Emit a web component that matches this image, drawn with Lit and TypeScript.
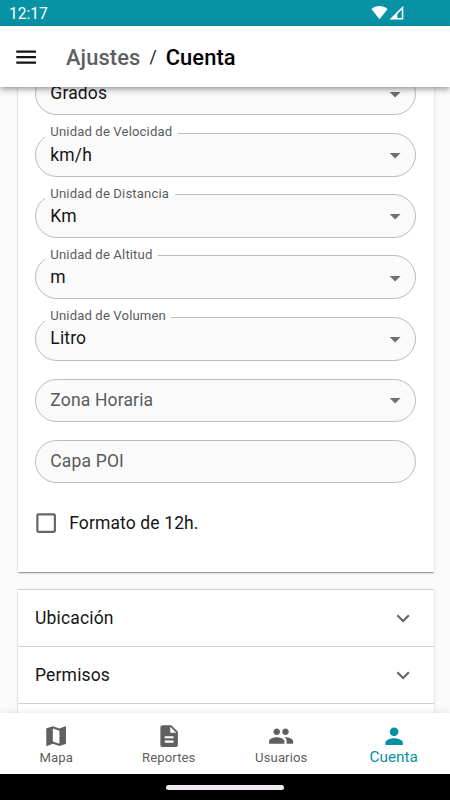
import { LitElement, html, css, svg, nothing } from "lit";
import { customElement, property } from "lit/decorators.js";
import { classMap } from "lit/directives/class-map.js";

const icons: Record<string, string> = {
  menu: "M3 18h18v-2H3v2zm0-5h18v-2H3v2zm0-7v2h18V6H3z",
  drop: "M7 10l5 5 5-5z",
  expand: "M16.59 8.59 12 13.17 7.41 8.59 6 10l6 6 6-6z",
  box: "M19 5v14H5V5h14m0-2H5c-1.1 0-2 .9-2 2v14c0 1.1.9 2 2 2h14c1.1 0 2-.9 2-2V5c0-1.1-.9-2-2-2z",
  map: "m20.5 3-.16.03L15 5.1 9 3 3.36 4.9c-.21.07-.36.25-.36.48V20.5c0 .28.22.5.5.5l.16-.03L9 18.9l6 2.1 5.64-1.9c.21-.07.36-.25.36-.48V3.5c0-.28-.22-.5-.5-.5zM15 19l-6-2.11V5l6 2.11V19z",
  description: "M14 2H6c-1.1 0-1.99.9-1.99 2L4 20c0 1.1.89 2 1.99 2H18c1.1 0 2-.9 2-2V8l-6-6zm2 16H8v-2h8v2zm0-4H8v-2h8v2zm-3-5V3.5L18.5 9H13z",
  people: "M16 11c1.66 0 2.99-1.34 2.99-3S17.66 5 16 5c-1.66 0-3 1.34-3 3s1.34 3 3 3zm-8 0c1.66 0 2.99-1.34 2.99-3S9.66 5 8 5C6.34 5 5 6.34 5 8s1.34 3 3 3zm0 2c-2.33 0-7 1.17-7 3.5V19h14v-2.5c0-2.33-4.67-3.5-7-3.5zm8 0c-.29 0-.62.02-.97.05 1.16.84 1.97 1.97 1.97 3.45V19h6v-2.5c0-2.33-4.67-3.5-7-3.5z",
  person: "M12 12c2.21 0 4-1.79 4-4s-1.79-4-4-4-4 1.79-4 4 1.79 4 4 4zm0 2c-2.67 0-8 1.34-8 4v2h16v-2c0-2.66-5.33-4-8-4z",
};

@customElement("ui-icon")
class UiIcon extends LitElement {
  @property() name = "";
  static styles = css`
    :host { display: block; width: 26.26px; height: 26.26px; flex: none; }
    svg { display: block; width: 100%; height: 100%; fill: currentColor; }
  `;
  render() {
    return html`<svg viewBox="0 0 24 24">${svg`<path d=${icons[this.name] ?? ""}></path>`}</svg>`;
  }
}

@customElement("outlined-field")
class OutlinedField extends LitElement {
  @property() label = "";
  @property() value = "";
  @property({ type: Boolean }) select = false;
  static styles = css`
    :host { display: block; }
    .field {
      position: relative; box-sizing: border-box; height: 43.4px; display: flex;
      align-items: center; justify-content: space-between;
      padding: 0 8px 0 15.3px; border-radius: 22px; background: #fafafa;
    }
    fieldset {
      position: absolute; inset: -6px 0 0 0; margin: 0; padding: 0 0 0 8.8px;
      border: 1px solid #bcbcbc; border-radius: 22px; min-width: 0; pointer-events: none;
    }
    .plain fieldset { inset: 0; }
    legend {
      height: 12px; padding: 0; visibility: hidden; font-size: 13.13px;
      letter-spacing: 0.13px; line-height: 12px; white-space: nowrap;
    }
    legend span { padding: 0 5.5px; }
    .label {
      position: absolute; left: 15.3px; top: -10px; font-size: 13.13px; line-height: 18px;
      letter-spacing: 0.13px; color: #5c5c5c; white-space: nowrap;
    }
    .value { font-size: 17.5px; line-height: 26px; margin-top: -1px; letter-spacing: 0.16px; color: #151515; }
    .plain .value { color: #5a5a5a; }
    ui-icon { color: #707070; }
  `;
  render() {
    const filled = this.value !== "";
    return html`<div class=${classMap({ field: true, plain: !filled })}>
      <fieldset>${filled ? html`<legend>${this.label ? html`<span>${this.label}</span>` : nothing}</legend>` : nothing}</fieldset>
      ${filled && this.label ? html`<span class="label">${this.label}</span>` : nothing}
      <span class="value">${filled ? this.value : this.label}</span>
      ${this.select ? html`<ui-icon name="drop"></ui-icon>` : nothing}
    </div>`;
  }
}

@customElement("app-root")
class AppRoot extends LitElement {
  static styles = css`
    :host {
      display: flex; flex-direction: column; width: 450px; height: 800px; overflow: hidden;
      font-family: Roboto, sans-serif; background: #fafafa; color: #151515;
    }
    .status {
      height: 26px; flex: none; box-sizing: border-box; background: #0893a4; color: #fff;
      display: flex; align-items: center; justify-content: space-between;
      padding: 1px 46px 0 9px; font-size: 15.6px;
    }
    .signals { display: flex; gap: 1px; margin-top: -2px; }
    .signals svg { display: block; height: 15px; }
    .wifi { width: 17px; }
    .cell { width: 15px; }
    .bar {
      height: 61.3px; flex: none; box-sizing: border-box; background: #fff; display: flex;
      align-items: center; padding: 0 13.4px; z-index: 2;
      box-shadow: 0 2px 4px -1px rgba(0,0,0,.2), 0 4px 5px rgba(0,0,0,.14), 0 1px 10px rgba(0,0,0,.12);
    }
    .crumbs {
      display: flex; align-items: center; margin-left: 26.3px; padding-top: 1px; font-size: 21.9px;
      letter-spacing: 0.1px; font-weight: 500;
    }
    .parent { color: #5f5f5f; }
    .slash { font-size: 17.5px; font-weight: 400; margin: 0 9px; }
    .current { color: #000; }
    .content { flex: 1; min-height: 0; overflow: hidden; padding: 0 16.5px 0 17.5px; }
    .card {
      background: #fff;
      box-shadow: 0 2px 1px -1px rgba(0,0,0,.2), 0 1px 1px rgba(0,0,0,.14), 0 1px 3px rgba(0,0,0,.12);
    }
    .form {
      display: flex; flex-direction: column; gap: 17.9px; margin-top: -40px;
      box-sizing: border-box; height: 525.2px; padding: 24.8px 17.5px 0;
    }
    .check { display: flex; align-items: center; gap: 10px; margin-top: 8.6px; margin-left: -2px; font-size: 17.5px; letter-spacing: 0.12px; }
    .check ui-icon { color: #666; }
    .panels { margin-top: 17px; }
    .panel {
      display: flex; align-items: center; justify-content: space-between; box-sizing: border-box;
      height: 57px; padding: 0 17.5px; border-top: 1px solid #d2d2d2;
      font-size: 17.5px; letter-spacing: 0.16px;
    }
    .panel ui-icon { color: #666; }
    .nav {
      height: 61px; flex: none; background: #fff; display: grid; grid-template-columns: repeat(4, 1fr);
      z-index: 2; box-shadow: 0 3px 3px -2px rgba(0,0,0,.2), 0 3px 4px rgba(0,0,0,.14), 0 1px 8px rgba(0,0,0,.12);
    }
    .item {
      display: flex; flex-direction: column; align-items: center; justify-content: center; padding-top: 1.4px;
      color: #606060; font-size: 13.13px; line-height: 15.6px; letter-spacing: 0.1px;
    }
    .item.active { color: #0891a2; font-size: 15.3px; letter-spacing: 0; }
    .system { height: 26px; flex: none; background: #000; display: flex; justify-content: center; z-index: 3; }
    .handle { width: 118px; height: 5px; margin-top: 10.5px; border-radius: 3px; background: #eee9ee; }
  `;
  private fields = [
    { label: "", value: "Grados", select: true },
    { label: "Unidad de Velocidad", value: "km/h", select: true },
    { label: "Unidad de Distancia", value: "Km", select: true },
    { label: "Unidad de Altitud", value: "m", select: true },
    { label: "Unidad de Volumen", value: "Litro", select: true },
    { label: "Zona Horaria", value: "", select: true },
    { label: "Capa POI", value: "", select: false },
  ];
  private tabs = [
    ["map", "Mapa"],
    ["description", "Reportes"],
    ["people", "Usuarios"],
    ["person", "Cuenta"],
  ];
  render() {
    return html`
      <div class="status">
        <span>12:17</span>
        <div class="signals">
          <svg class="wifi" viewBox="0 0 17 15"><path fill="#fff" d="M8.5 14.3.4 4.1C2.6 2 5.4.9 8.5.9s5.9 1.1 8.1 3.2z"></path></svg>
          <svg class="cell" viewBox="0 0 15 15"><path fill="#fff" fill-rule="evenodd" d="M.5 14.5 14.3.7v13.8zM8.3 13h4.5V4.5L8.3 8.9z"></path></svg>
        </div>
      </div>
      <header class="bar">
        <ui-icon name="menu"></ui-icon>
        <div class="crumbs">
          <span class="parent">Ajustes</span><span class="slash">/</span><span class="current">Cuenta</span>
        </div>
      </header>
      <main class="content">
        <section class="card form">
          ${this.fields.map((f) => html`<outlined-field .label=${f.label} .value=${f.value} .select=${f.select}></outlined-field>`)}
          <div class="check"><ui-icon name="box"></ui-icon><span>Formato de 12h.</span></div>
        </section>
        <section class="card panels">
          ${["Ubicación", "Permisos", ""].map((t) => html`<div class="panel"><span>${t}</span>${t ? html`<ui-icon name="expand"></ui-icon>` : nothing}</div>`)}
        </section>
      </main>
      <nav class="nav">
        ${this.tabs.map(([icon, label]) => html`<div class=${classMap({ item: true, active: label === "Cuenta" })}>
          <ui-icon name=${icon}></ui-icon><span>${label}</span>
        </div>`)}
      </nav>
      <div class="system"><div class="handle"></div></div>
    `;
  }
}
